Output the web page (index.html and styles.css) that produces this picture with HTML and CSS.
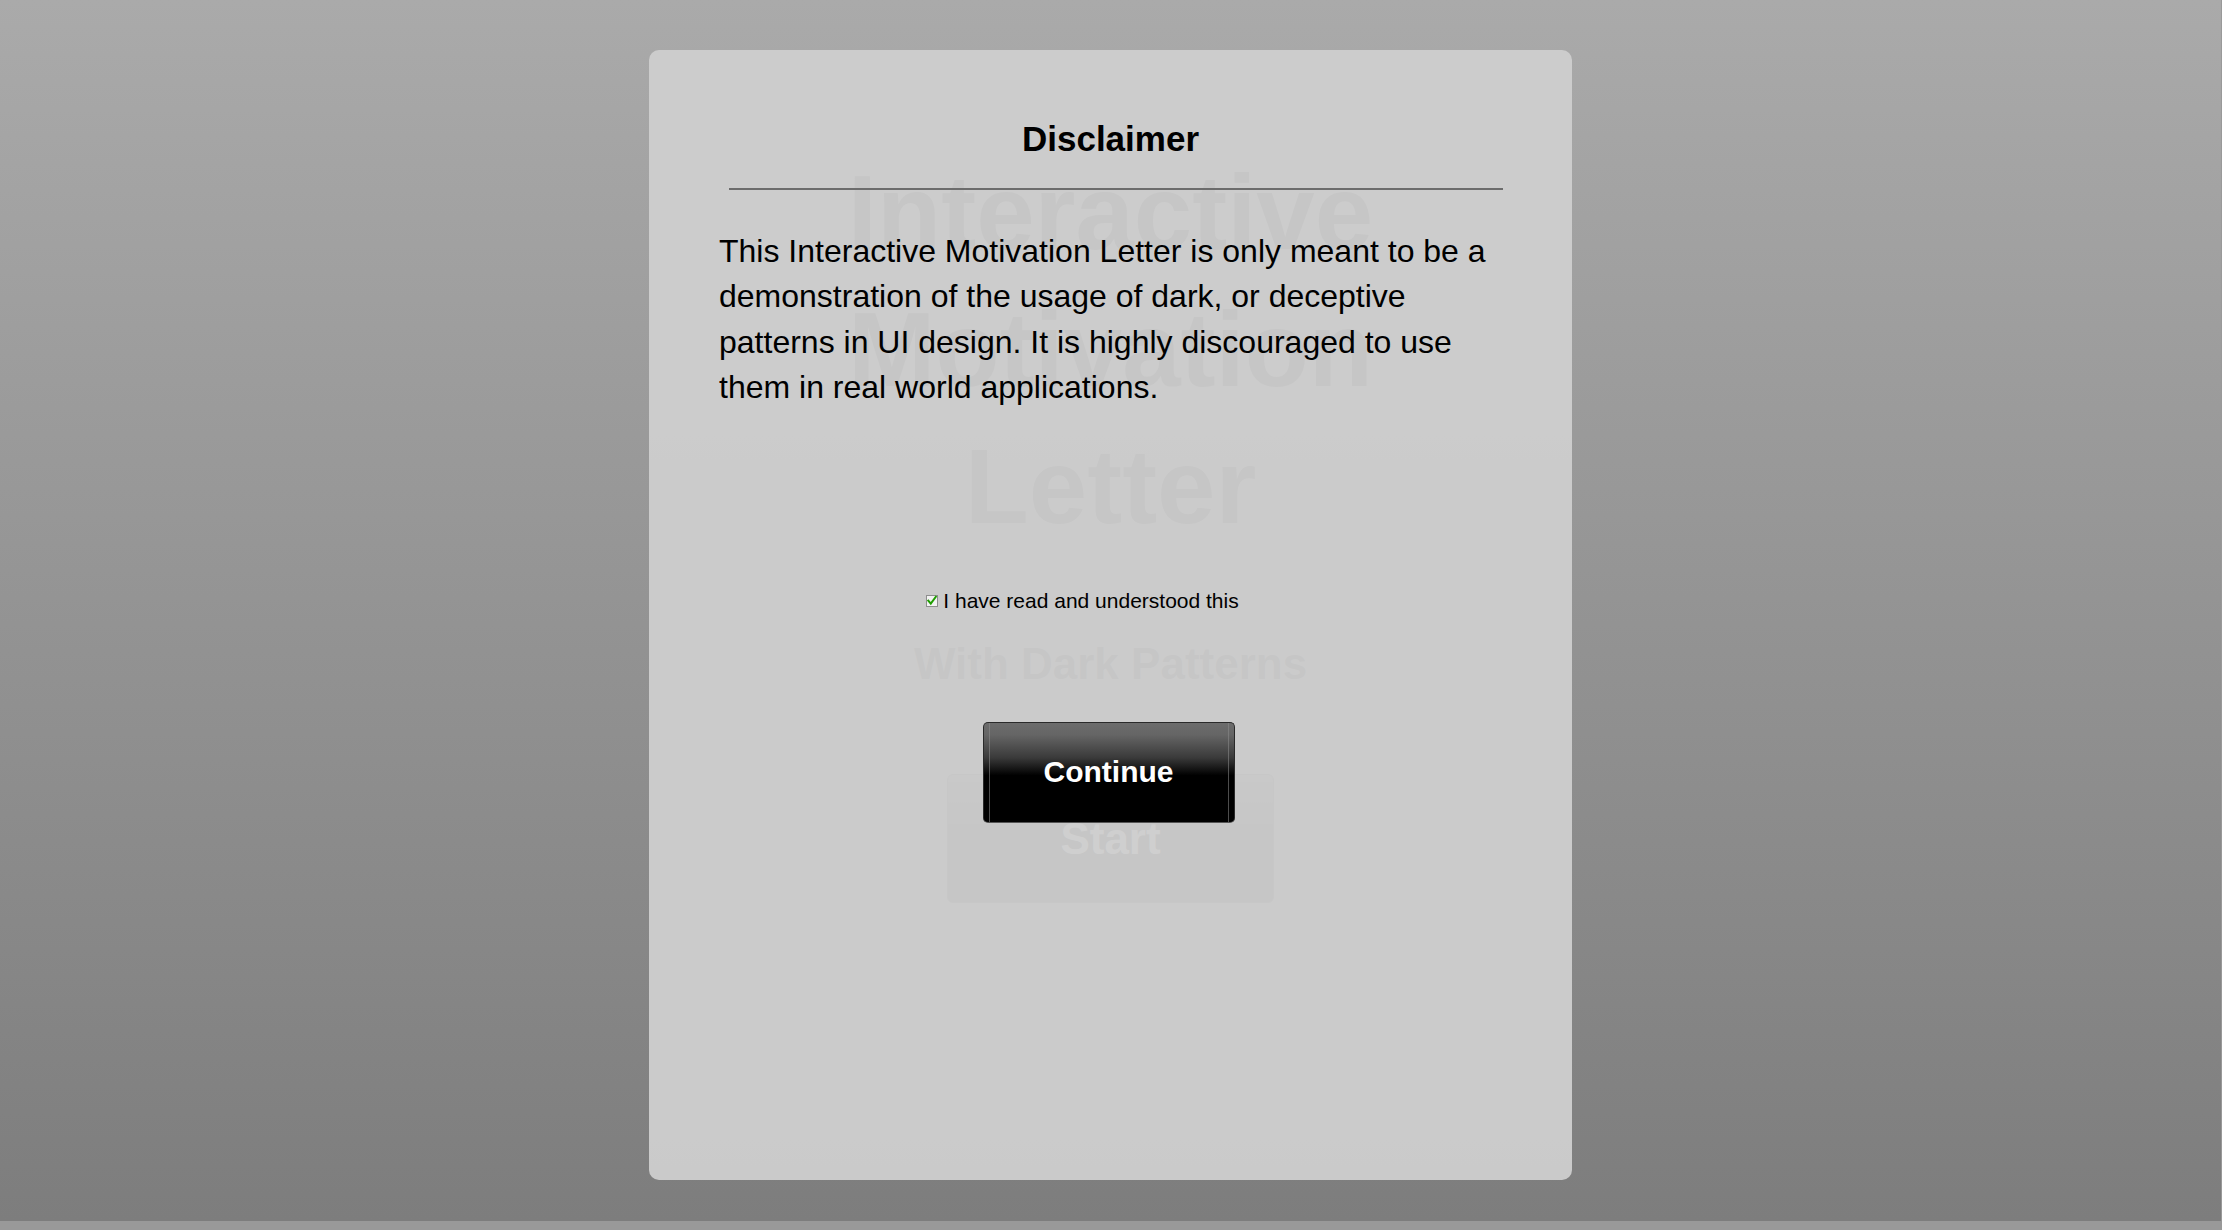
FILE: index.html
```html
<!DOCTYPE html>
<html lang="en">
<head>
<meta charset="utf-8">
<title>Interactive Motivation Letter</title>
<link rel="stylesheet" href="styles.css">
</head>
<body>
  <main class="page">
    <h1 class="page-title">Interactive<br>Motivation<br>Letter</h1>
    <p class="page-subtitle">With Dark Patterns</p>
    <button class="start-btn" type="button">Start</button>
  </main>

  <div class="overlay">
    <section class="modal" role="dialog" aria-labelledby="dlg-title">
      <h2 class="modal-title" id="dlg-title">Disclaimer</h2>
      <div class="modal-rule"></div>
      <p class="modal-text">This Interactive Motivation Letter is only meant to be a demonstration of the usage of dark, or deceptive patterns in UI design. It is highly discouraged to use them in real world applications.</p>
      <label class="confirm-row">
        <span class="checkbox" aria-hidden="true">
          <svg width="12" height="12" viewBox="0 0 12 12">
            <rect x="0.5" y="0.5" width="11" height="11" fill="#f2f2f2" stroke="#8e8e8e"/>
            <path d="M2.3 5.6 L4.8 8.6 L9.8 1.8" fill="none" stroke="#1f9e00" stroke-width="2" stroke-linecap="square"/>
          </svg>
        </span>
        <span class="confirm-text">I have read and understood this</span>
      </label>
      <button class="continue-btn" type="button">Continue</button>
    </section>
  </div>
</body>
</html>
```

FILE: styles.css
```css
html {
  background: #999999;
  margin: 0;
  padding: 0;
}

body {
  margin: 0;
  width: 2221px;
  height: 1221px;
  background: linear-gradient(to bottom, #aaaaaa 0%, #7d7d7d 100%);
  font-family: "Liberation Sans", Arial, sans-serif;
  position: relative;
  overflow: hidden;
}

/* underlying page */
.page {
  display: flex;
  flex-direction: column;
  align-items: center;
  padding-top: 144px;
}

.page-title {
  margin: 0;
  font-size: 105px;
  line-height: 137px;
  font-weight: bold;
  text-align: center;
  color: #000;
}

.page-subtitle {
  margin: 84px 0 0;
  font-size: 44px;
  line-height: 50px;
  font-weight: bold;
  color: #000;
}

.start-btn {
  margin-top: 85px;
  width: 327px;
  height: 129px;
  border: 1px solid #222;
  border-radius: 6px;
  background: linear-gradient(to bottom, #555 0%, #000 55%, #000 100%);
  color: #fff;
  font-family: "Liberation Sans", Arial, sans-serif;
  font-weight: bold;
  font-size: 44px;
}

/* modal overlay */
.overlay {
  position: absolute;
  inset: 0;
  display: flex;
  justify-content: center;
  align-items: flex-start;
  padding-top: 50px;
}

.modal {
  box-sizing: border-box;
  width: 923px;
  height: 1130px;
  border-radius: 10px;
  background: rgba(205, 205, 205, 0.965);
  padding: 69px 70px 0;
  display: flex;
  flex-direction: column;
  align-items: stretch;
}

.modal-title {
  margin: 0;
  font-size: 35px;
  line-height: 40px;
  font-weight: bold;
  text-align: center;
  color: #000;
}

.modal-rule {
  margin: 29px -1px 0 10px;
  height: 2px;
  background: #6c6c6c;
}

.modal-text {
  margin: 38.5px 0 0;
  font-size: 32px;
  line-height: 45.6px;
  color: #000;
}

.confirm-row {
  margin-top: 178px;
  display: flex;
  justify-content: center;
  align-items: center;
  gap: 5px;
  padding-right: 56px;
  font-size: 21px;
  line-height: 24px;
  color: #000;
}

.checkbox {
  display: flex;
  width: 12px;
  height: 12px;
  margin-top: 1px;
}

.continue-btn {
  margin: 109px 4px 0 0;
  align-self: center;
  box-sizing: border-box;
  width: 252px;
  height: 101px;
  border: 1px solid #2a2a2a;
  border-bottom-color: #555;
  border-radius: 5px;
  background:
    linear-gradient(to right,
      transparent 5px, rgba(140,140,140,0.55) 5px, rgba(140,140,140,0.55) 6px, transparent 6px,
      transparent calc(100% - 6px), rgba(140,140,140,0.55) calc(100% - 6px), rgba(140,140,140,0.55) calc(100% - 5px), transparent calc(100% - 5px)),
    linear-gradient(to bottom, #6c6c6c 0%, #656565 12%, #3a3a3a 35%, #000 53%, #000 100%);
  color: #fff;
  font-family: "Liberation Sans", Arial, sans-serif;
  font-weight: bold;
  font-size: 30px;
  padding: 0;
}
```
